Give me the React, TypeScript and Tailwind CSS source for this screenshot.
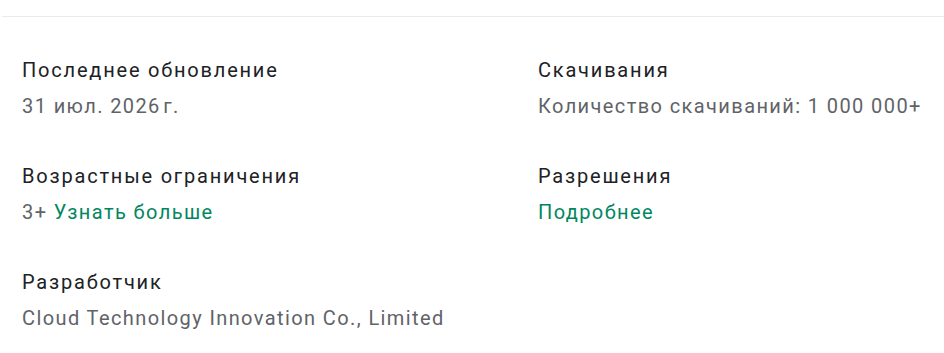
import React from "react";

const items: { title: string; value: React.ReactNode }[] = [
  { title: "Последнее обновление", value: "31 июл. 2026\u202Fг." },
  { title: "Скачивания", value: "Количество скачиваний: 1 000 000+" },
  {
    title: "Возрастные ограничения",
    value: (
      <>
        3+ <span className="text-[#01875f]">Узнать больше</span>
      </>
    ),
  },
  { title: "Разрешения", value: <span className="text-[#01875f]">Подробнее</span> },
  { title: "Разработчик", value: "Cloud Technology Innovation Co., Limited" },
];

export default function App() {
  return (
    <div
      className="w-[944px] h-[353px] bg-white overflow-hidden"
      style={{ fontFamily: "Roboto, 'Noto Sans', sans-serif" }}
    >
      <div className="ml-[2px] mt-[16px] h-px bg-[#e8eaed]" />
      <div className="grid grid-cols-[516px_1fr] pl-[22px] pt-[41px] gap-y-[46px]">
        {items.map((it, i) => (
          <div key={i} className="flex flex-col gap-[12px]">
            <div className="text-[20px] leading-[24px] tracking-[1.8px] text-[#202124]">{it.title}</div>
            <div className="text-[20px] leading-[24px] tracking-[1.4px] text-[#5f6368]">{it.value}</div>
          </div>
        ))}
      </div>
    </div>
  );
}
